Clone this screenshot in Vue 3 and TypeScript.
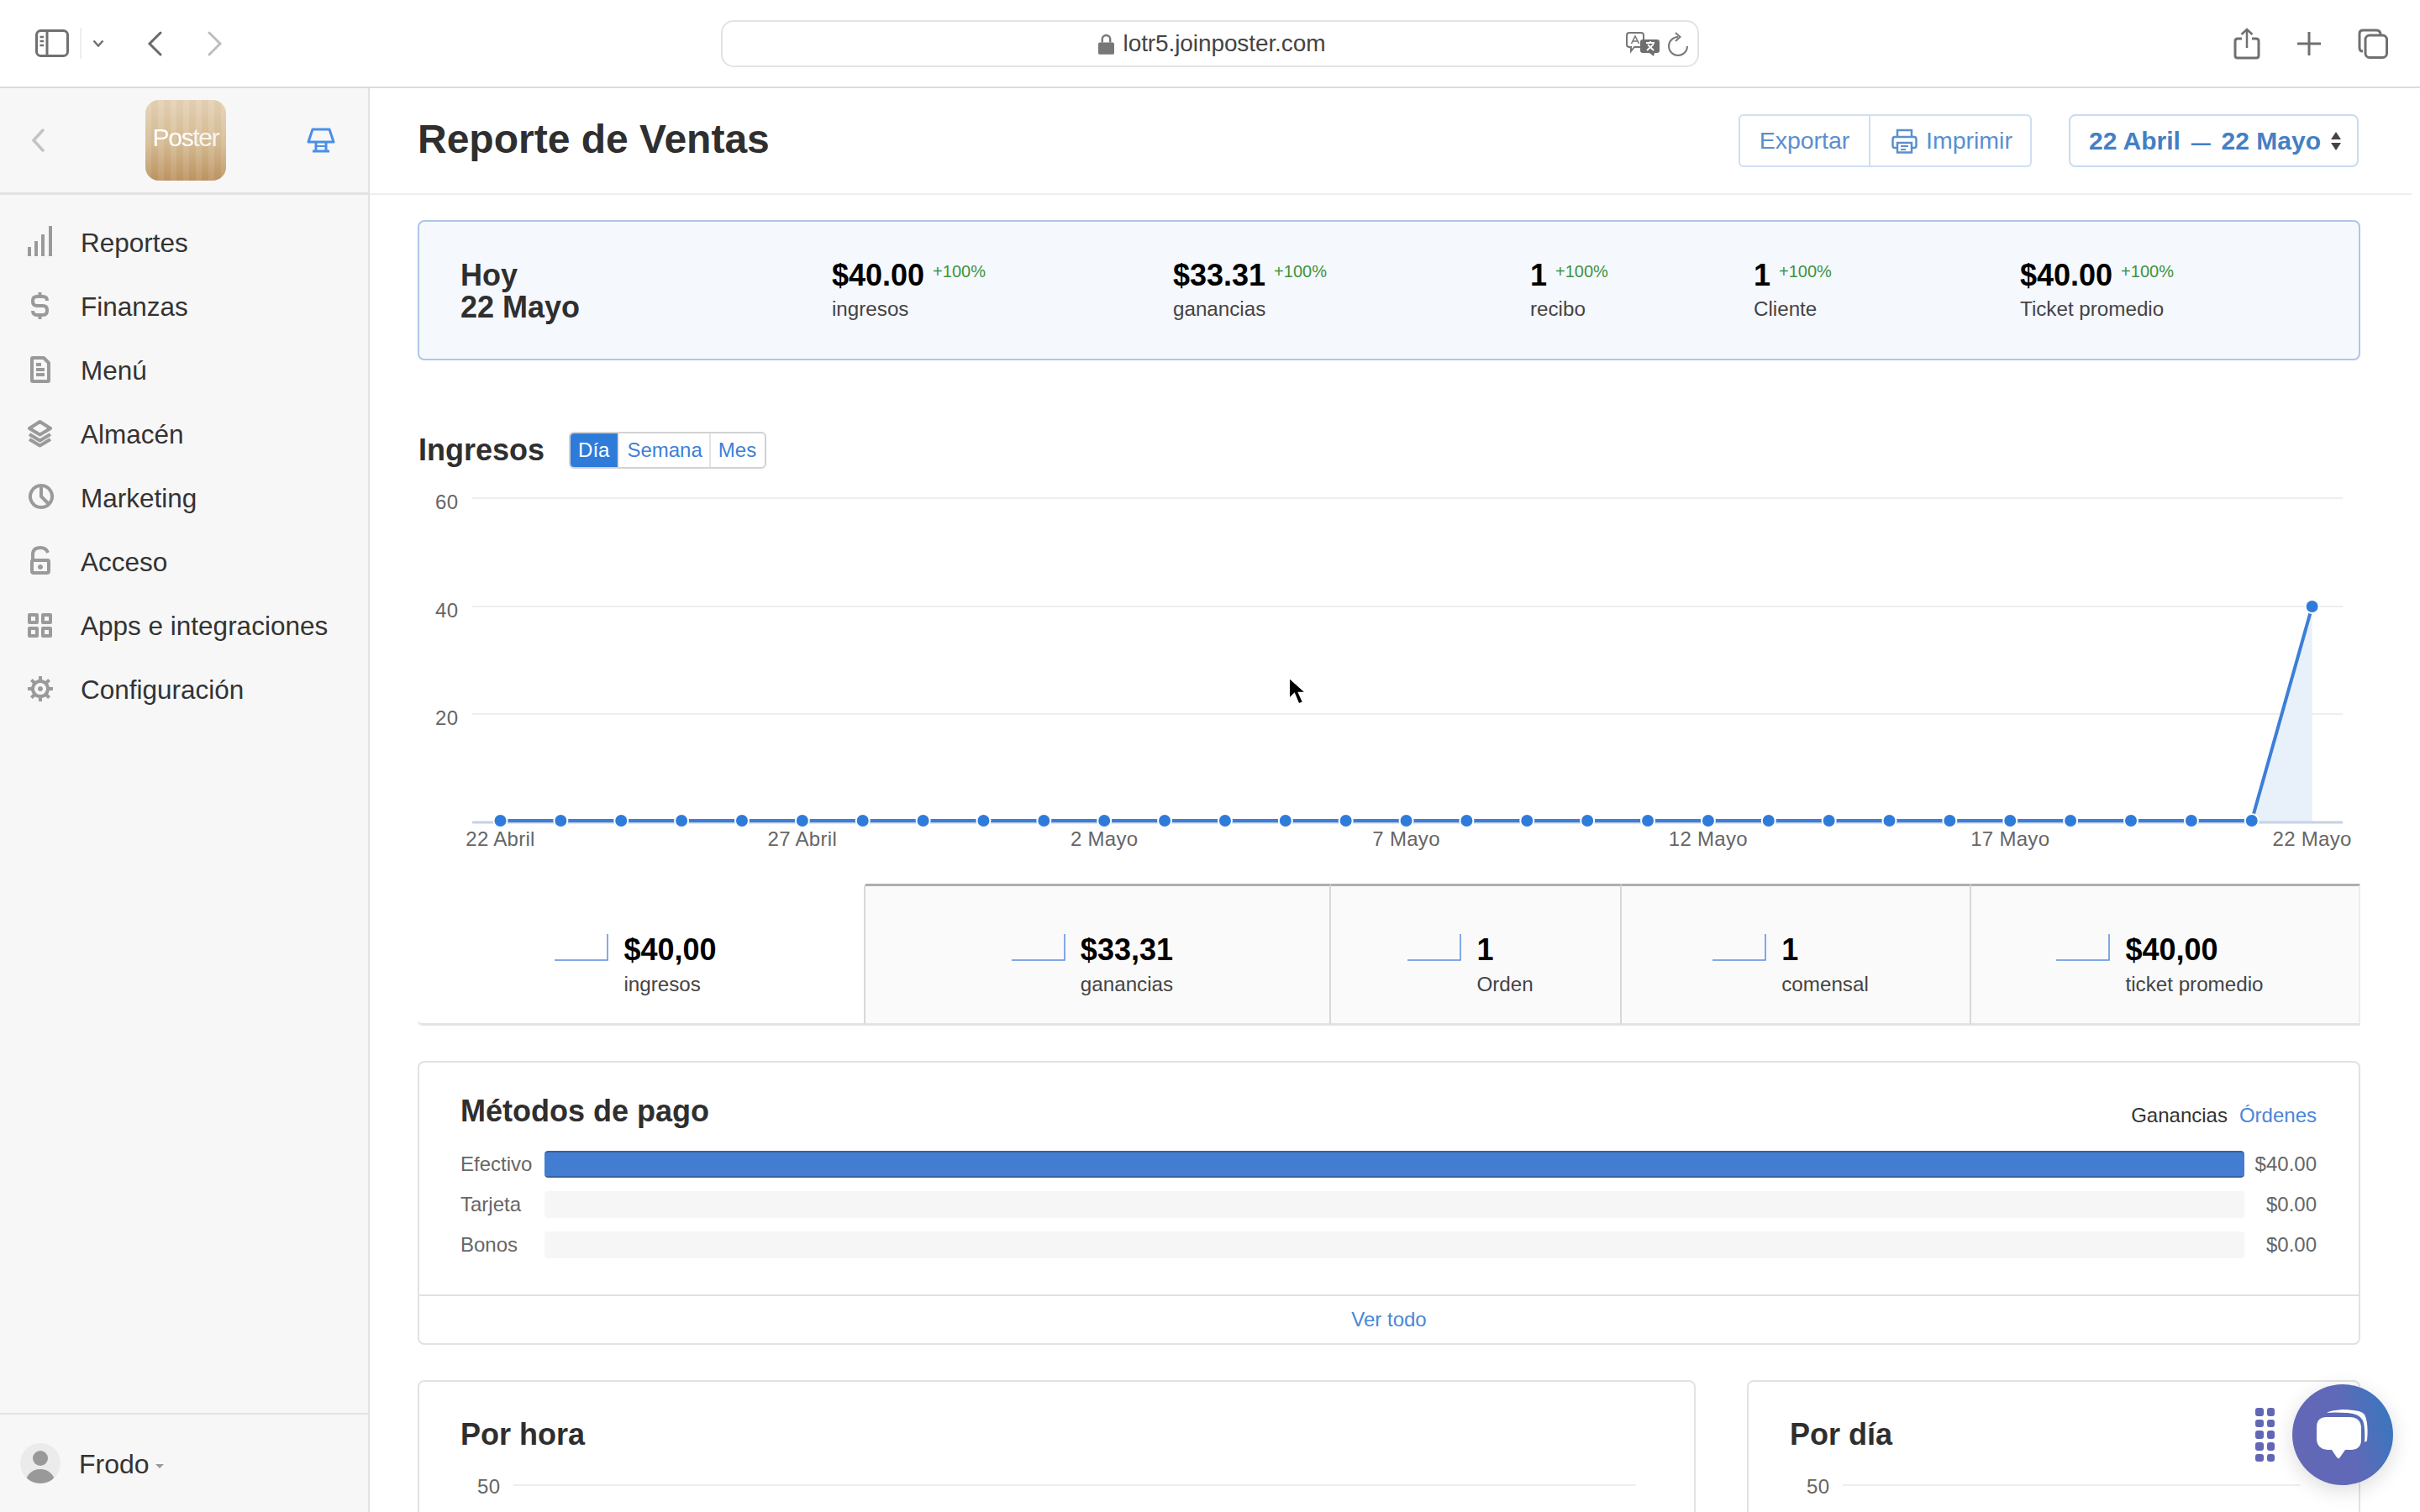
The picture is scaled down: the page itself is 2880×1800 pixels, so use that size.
<script setup lang="ts">
interface NavItem { label: string; stroke: string; fill: string }

const nav: NavItem[] = [
  { label: 'Reportes', stroke: '', fill: 'M5 25h4v11H5zM13 18h4v18h-4zM21 10h4v26h-4zM30 0h4v36h-4z' },
  { label: 'Finanzas', stroke: 'M28 13Q28 8 23 8H16Q11 8 11 13V14Q11 19 16 19H23Q28 19 28 24V25Q28 30 23 30H16Q11 30 11 25M19.5 3V8M19.5 30V35', fill: '' },
  { label: 'Menú', stroke: 'M10 6Q10 5 11 5H24L30 11V32Q30 33 29 33H11Q10 33 10 32ZM15 13H21M15 19H25M15 25H25', fill: '' },
  { label: 'Almacén', stroke: 'M19.5 5L32 13L19.5 20.500L7 13ZM7 20L19.5 27.500L32 20M7 26L19.500 33.500L32 26', fill: '' },
  { label: 'Marketing', stroke: 'M21 5a13 13 0 1 0 .01 0M21 5V18L30 27', fill: '' },
  { label: 'Acceso', stroke: 'M11 18V11Q11 3 20 3Q27 3 29 9M11 18H29Q30 18 30 20V31Q30 33 28 33H12Q10 33 10 31V20Q10 18 11 18Z', fill: 'M20 23a3 3 0 1 0 .01 0' },
  { label: 'Apps e integraciones', stroke: 'M7 7h9v9H7zM23 7h9v9h-9zM7 23h9v9H7zM23 23h9v9h-9z', fill: '' },
  { label: 'Configuración', stroke: 'M20 10a9 9 0 1 0 .01 0M20 4V9M20 29V34M5 19H10M30 19H35M9.400 8.400L13 12M27 26L30.600 29.600M30.600 8.400L27 12M13 26L9.400 29.600', fill: 'M20 16a3 3 0 1 0 .01 0' },
]

const stats = [
  { value: '$40.00', label: 'ingresos' },
  { value: '$33.31', label: 'ganancias' },
  { value: '1', label: 'recibo' },
  { value: '1', label: 'Cliente' },
  { value: '$40.00', label: 'Ticket promedio' },
]

const metrics = [
  { value: '$40,00', label: 'ingresos', active: true },
  { value: '$33,31', label: 'ganancias', active: false },
  { value: '1', label: 'Orden', active: false },
  { value: '1', label: 'comensal', active: false },
  { value: '$40,00', label: 'ticket promedio', active: false },
]

const payments = [
  { label: 'Efectivo', value: '$40.00', pct: 100 },
  { label: 'Tarjeta', value: '$0.00', pct: 0 },
  { label: 'Bonos', value: '$0.00', pct: 0 },
]

const gridLines = [
  { y: 23, label: '60' },
  { y: 152, label: '40' },
  { y: 280, label: '20' },
]

const step = 71.87
const x0 = 98.5
const baseY = 407
const points = Array.from({ length: 31 }, (_, i) => ({
  x: x0 + step * i,
  y: i === 30 ? 152 : baseY,
}))
const linePoints = points.map((p) => `${p.x},${p.y}`).join(' ')
const xLabels = ['22 Abril', '27 Abril', '2 Mayo', '7 Mayo', '12 Mayo', '17 Mayo', '22 Mayo'].map((text, i) => ({
  text,
  x: x0 + step * 5 * i,
}))
const dots = Array.from({ length: 10 }, (_, i) => i)
</script>

<template>
  <div class="app">
    <header class="toolbar">
      <div class="tb-left">
        <svg class="tb-sidebar" width="40" height="33" viewBox="0 0 40 33" fill="none" stroke="#707070" stroke-width="3">
          <rect x="1.500" y="1.500" width="37" height="30" rx="5" />
          <path d="M14 2V31" />
          <path d="M5.500 9H10M5.500 14H10M5.500 19H10" stroke-width="2.500" />
        </svg>
        <span class="tb-sep"></span>
        <svg class="tb-caret" width="14" height="9" viewBox="0 0 14 9" fill="none" stroke="#707070" stroke-width="2.500">
          <path d="M1.500 1.500L7 7.500L12.500 1.500" />
        </svg>
        <svg class="tb-back" width="18" height="30" viewBox="0 0 18 30" fill="none" stroke="#6a6a6a" stroke-width="3" stroke-linecap="round">
          <path d="M16 2L3 15L16 28" />
        </svg>
        <svg class="tb-fwd" width="18" height="30" viewBox="0 0 18 30" fill="none" stroke="#bdbdbd" stroke-width="3" stroke-linecap="round">
          <path d="M2 2L15 15L2 28" />
        </svg>
      </div>
      <div class="address">
        <span class="address-center">
          <svg width="19" height="25" viewBox="0 0 20 26" fill="#777">
            <path d="M2 11h16a2 2 0 0 1 2 2v11a2 2 0 0 1-2 2H2a2 2 0 0 1-2-2V13a2 2 0 0 1 2-2z" />
            <path d="M5 11V7a5 5 0 0 1 10 0v4" fill="none" stroke="#777" stroke-width="2.500" />
          </svg>
          <span class="address-text">lotr5.joinposter.com</span>
        </span>
        <span class="address-right">
          <svg width="41" height="29" viewBox="0 0 41 29" fill="none">
            <path d="M4 1H18Q21 1 21 4V15Q21 18 18 18H10L6 23V18H4Q1 18 1 15V4Q1 1 4 1Z" stroke="#777" stroke-width="2" fill="#fff" />
            <path d="M6.500 14L11 5L15.500 14M8 11H14" stroke="#777" stroke-width="1.600" />
            <path d="M20 9H37Q40 9 40 12V22Q40 25 37 25H34L33 29L28 25H20Q17 25 17 22V12Q17 9 20 9Z" fill="#6e6e6e" />
            <path d="M24 13H34M29 11V13M25 22L33 14.500M26 15L33 22" stroke="#fff" stroke-width="1.800" />
          </svg>
          <svg width="26" height="30" viewBox="0 0 26 30" fill="none" stroke="#777" stroke-width="2">
            <path d="M13 6A11 11 0 1 0 24 17" />
            <path d="M10 1L15.500 6L10 11" />
          </svg>
        </span>
      </div>
      <div class="tb-right">
        <svg width="32" height="38" viewBox="0 0 32 38" fill="none" stroke="#707070" stroke-width="3">
          <path d="M10 13H5Q2 13 2 16V33Q2 36 5 36H27Q30 36 30 33V16Q30 13 27 13H22" />
          <path d="M16 24V2M9.500 8L16 2L22.500 8" stroke-width="2.500" />
        </svg>
        <svg class="tb-plus" width="28" height="28" viewBox="0 0 28 28" fill="none" stroke="#707070" stroke-width="3">
          <path d="M14 0V28M0 14H28" />
        </svg>
        <svg class="tb-tabs" width="36" height="36" viewBox="0 0 36 36" fill="none" stroke="#707070" stroke-width="3">
          <path d="M6 27Q2 27 2 23V6Q2 2 6 2H22Q27 2 27 7" />
          <rect x="9" y="8" width="25.500" height="26.500" rx="5" />
        </svg>
      </div>
    </header>

    <div class="body">
      <aside class="sidebar">
        <div class="side-head">
          <svg class="side-back" width="16" height="28" viewBox="0 0 16 28" fill="none" stroke="#c3c3c3" stroke-width="3.500" stroke-linecap="round">
            <path d="M14 2L3 14L14 26" />
          </svg>
          <div class="logo"><span class="logo-strong">Pos</span><span class="logo-light">ter</span></div>
          <svg width="34" height="30" viewBox="0 0 34 30" fill="none" stroke="#4a8fe7" stroke-width="3" stroke-linejoin="round">
            <path d="M7 2H27L32 17H2Z" />
            <path d="M11 17V27M23 17V27M7 28H27" />
            <path d="M11 22H23" stroke-width="2" />
          </svg>
        </div>
        <nav class="nav">
          <a v-for="item in nav" :key="item.label" class="nav-row">
            <svg class="nav-icon" width="40" height="40" viewBox="0 0 40 40">
              <path v-if="item.stroke" :d="item.stroke" fill="none" stroke="#9a9a9a" stroke-width="4" stroke-linejoin="round" />
              <path v-if="item.fill" :d="item.fill" fill="#9a9a9a" />
            </svg>
            <span>{{ item.label }}</span>
          </a>
        </nav>
        <div class="user">
          <svg width="48" height="48" viewBox="0 0 48 48">
            <clipPath id="avatarClip"><circle cx="24" cy="24" r="24" /></clipPath>
            <circle cx="24" cy="24" r="24" fill="#ebebeb" />
            <g clip-path="url(#avatarClip)" fill="#999">
              <circle cx="24" cy="18" r="9" />
              <ellipse cx="24" cy="46" rx="17" ry="15" />
            </g>
          </svg>
          <span class="user-name">Frodo</span>
          <span class="user-caret"></span>
        </div>
      </aside>

      <main class="main">
        <div class="page-head">
          <h1>Reporte de Ventas</h1>
          <div class="head-actions">
            <div class="btn-group">
              <button class="btn btn-export">Exportar</button>
              <button class="btn btn-print">
                <svg width="31" height="30" viewBox="0 0 31 30" fill="none" stroke="#5a8fd0" stroke-width="2.500">
                  <path d="M7 10V2H24V10" />
                  <path d="M7 23H4Q1.500 23 1.500 20.500V13Q1.500 10 4 10H27Q29.500 10 29.500 13V20.500Q29.500 23 27 23H24" />
                  <path d="M7 17H24V28.500H7Z" />
                  <path d="M11 21H20M11 25H17" stroke-width="2" />
                </svg>
                <span>Imprimir</span>
              </button>
            </div>
            <button class="date-btn">
              <span>22 Abril <span class="dash">—</span> 22 Mayo</span>
              <svg width="12" height="22" viewBox="0 0 12 22" fill="#444">
                <path d="M6 0L12 9H0ZM0 13H12L6 22Z" />
              </svg>
            </button>
          </div>
        </div>

        <div class="content">
          <section class="today">
            <div class="today-title">Hoy<br />22 Mayo</div>
            <div v-for="s in stats" :key="s.label" class="today-stat">
              <div class="stat-top">
                <span class="big">{{ s.value }}</span>
                <span class="pct">+100%</span>
              </div>
              <div class="small">{{ s.label }}</div>
            </div>
          </section>

          <div class="chart-head">
            <h2>Ingresos</h2>
            <div class="seg">
              <span class="seg-item seg-on">Día</span>
              <span class="seg-item seg-mid">Semana</span>
              <span class="seg-item seg-end">Mes</span>
            </div>
          </div>

          <svg class="chart" width="2312" height="483" viewBox="0 0 2312 483">
            <g v-for="g in gridLines" :key="g.label">
              <rect x="65" :y="g.y - 1" width="2226" height="2" fill="#eeeeee" />
              <text x="21" :y="g.y + 13" class="axis">{{ g.label }}</text>
            </g>
            <polygon :points="`2183,408 2254.600,152 2254.600,408`" fill="#e8f0fa" />
            <rect x="65" y="407.500" width="2226" height="3" fill="#c6d2e2" />
            <polyline :points="linePoints" fill="none" stroke="#3c7ed8" stroke-width="4" />
            <circle v-for="(p, i) in points" :key="i" :cx="p.x" :cy="p.y" r="8" fill="#2f7bd9" stroke="#fff" stroke-width="2" />
            <text v-for="l in xLabels" :key="l.text" :x="l.x" y="436.500" text-anchor="middle" class="axis">{{ l.text }}</text>
          </svg>

          <section class="metrics">
            <div v-for="m in metrics" :key="m.label" class="metric" :class="{ 'metric-on': m.active }">
              <svg class="spark" width="64" height="32" viewBox="0 0 64 32" fill="none">
                <path d="M0 31H63V0" stroke="#5b8fe0" stroke-width="1.500" />
              </svg>
              <div>
                <div class="big">{{ m.value }}</div>
                <div class="small metric-label">{{ m.label }}</div>
              </div>
            </div>
          </section>

          <section class="card payments">
            <div class="pay-body">
              <div class="pay-head">
                <h2>Métodos de pago</h2>
                <div class="pay-toggle">
                  <span class="toggle-on">Ganancias</span>
                  <span class="link">Órdenes</span>
                </div>
              </div>
              <div class="pay-rows">
                <div v-for="p in payments" :key="p.label" class="pay-row">
                  <span class="pay-label">{{ p.label }}</span>
                  <div class="track">
                    <div class="fill" :class="{ 'fill-full': p.pct > 0 }" :style="{ width: p.pct + '%' }"></div>
                  </div>
                  <span class="pay-value">{{ p.value }}</span>
                </div>
              </div>
            </div>
            <div class="pay-foot"><span class="link">Ver todo</span></div>
          </section>

          <div class="bottom">
            <section class="card mini">
              <h2>Por hora</h2>
              <div class="mini-axis"><span class="mini-label">50</span><span class="mini-line"></span></div>
            </section>
            <section class="card mini">
              <h2>Por día</h2>
              <div class="mini-axis"><span class="mini-label">50</span><span class="mini-line"></span></div>
            </section>
          </div>
        </div>
      </main>
    </div>

    <div class="grip"><span v-for="d in dots" :key="d" class="grip-dot"></span></div>
    <div class="chat">
      <svg width="120" height="120" viewBox="0 0 120 120" fill="#fff">
        <path d="M41 34Q44 31 60 30Q82 30 86 36Q91 46 89 67Q88 68 86 69Q87 52 84 43Q80 35 66 34Q50 33 41 34Z" />
        <path d="M29 51Q29 39 41 39H68Q81 39 82 51V66Q82 77 71 78H63L56 88Q55 89 53 87L47 78H42Q30 77 29 66Z" />
      </svg>
    </div>
    <svg class="cursor" width="23" height="35" viewBox="0 0 22 34">
      <path d="M1 1V25L7 19L12 31L17 29L12 18H20Z" fill="#000" stroke="#fff" stroke-width="1.500" />
    </svg>
  </div>
</template>

<style>
html, body { margin: 0; background: #fff; }
</style>

<style scoped>
* { box-sizing: border-box; }
h1, h2 { margin: 0; font-weight: 700; color: #2f2f2f; }
.app {
  position: relative;
  width: 2880px;
  height: 1800px;
  overflow: hidden;
  display: flex;
  flex-direction: column;
  font-family: "Liberation Sans", Arial, sans-serif;
  background: #fff;
  color: #333;
}
.toolbar {
  height: 105px;
  flex: none;
  display: grid;
  grid-template-columns: 858px 1164px 1fr;
  align-items: center;
  border-bottom: 2px solid #dcdcdc;
}
.tb-left { display: flex; align-items: center; padding-left: 42px; }
.tb-sidebar { margin-right: 13px; }
.tb-sep { width: 2px; height: 37px; background: #eeeeee; margin-right: 13px; }
.tb-caret { margin-right: 51px; }
.tb-back { margin-right: 54px; }
.address {
  height: 56px;
  border: 2px solid #e3e3e3;
  border-radius: 15px;
  position: relative;
  display: flex;
  align-items: center;
  justify-content: center;
}
.address-center { display: flex; align-items: center; gap: 11px; margin-left: 4px; padding-top: 1px; }
.address-text { font-size: 28px; color: #444; letter-spacing: -0.100px; }
.address-right {
  position: absolute;
  right: 10px;
  top: 12px;
  display: flex;
  align-items: flex-start;
  gap: 8px;
}
.tb-right { display: flex; align-items: center; padding-left: 636px; }
.tb-plus { margin-left: 44px; margin-right: 44px; }
.body { flex: 1; display: flex; min-height: 0; }
.sidebar {
  width: 440px;
  flex: none;
  background: #f7f7f7;
  border-right: 2px solid #e2e2e2;
  display: flex;
  flex-direction: column;
}
.side-head {
  height: 127px;
  flex: none;
  display: flex;
  align-items: center;
  padding-left: 37px;
  border-bottom: 3px solid #e2e2e2;
}
.side-back { margin-right: 120px; }
.logo {
  width: 96px;
  height: 96px;
  margin-right: 96px;
  border-radius: 16px;
  display: flex;
  align-items: center;
  justify-content: center;
  padding-bottom: 6px;
  color: #fff;
  font-size: 30px;
  letter-spacing: -1.300px;
  background:
    repeating-linear-gradient(90deg, rgba(255, 255, 255, 0.07) 0 7px, rgba(120, 80, 30, 0.03) 7px 15px),
    linear-gradient(180deg, #e5d3b7 0%, #d6bb93 55%, #bd9563 100%);
}
.logo-light { font-weight: 400; opacity: 0.85; }
.nav { padding-top: 19px; display: flex; flex-direction: column; }
.nav-row {
  height: 76px;
  display: flex;
  align-items: center;
  padding-left: 28px;
  gap: 28px;
  font-size: 31.500px;
  color: #333;
}
.user {
  margin-top: auto;
  height: 118px;
  border-top: 2px solid #e2e2e2;
  display: flex;
  align-items: center;
  padding: 0 0 0 24px;
}
.user-name { margin-left: 22px; margin-top: 2px; font-size: 32px; color: #333; }
.user-caret {
  margin-left: 7px;
  margin-top: 6px;
  width: 0;
  height: 0;
  border-left: 5px solid transparent;
  border-right: 5px solid transparent;
  border-top: 5px solid #999;
}
.main { flex: 1; min-width: 0; }
.page-head {
  height: 127px;
  margin-right: 10px;
  padding: 0 63px 0 57px;
  border-bottom: 2px solid #eeeeee;
  display: flex;
  align-items: center;
  justify-content: space-between;
}
.page-head h1 { font-size: 48px; line-height: 48px; margin-top: -4px; }
.head-actions { display: flex; gap: 44px; }
.btn-group {
  height: 63px;
  width: 349px;
  display: flex;
  border: 2px solid #cfdff2;
  border-radius: 6px;
}
.btn {
  border: 0;
  background: #fff;
  font: inherit;
  font-size: 28.500px;
  color: #5a8fd0;
  padding: 0;
  display: flex;
  align-items: center;
  border-radius: 6px;
}
.btn-export { width: 155px; justify-content: center; border-right: 2px solid #cfdff2; border-radius: 6px 0 0 6px; }
.btn-print { flex: 1; padding-left: 25px; gap: 10px; }
.date-btn {
  width: 345px;
  height: 63px;
  border: 2px solid #c9dbf0;
  border-radius: 8px;
  background: #fff;
  font: inherit;
  font-size: 30px;
  font-weight: 700;
  color: #4380c4;
  display: flex;
  align-items: center;
  padding: 0 0 0 22px;
  gap: 12px;
}
.dash { font-size: 23px; margin: 0 4.500px; }
.content { padding: 30px 71px 0 57px; }
.today {
  height: 167px;
  display: grid;
  grid-template-columns: 442px 406px 425px 266px 317px 1fr;
  padding: 45px 0 0 49px;
  background: #f5f8fd;
  border: 2px solid #aec6e8;
  border-radius: 8px;
}
.today-title { font-size: 36px; line-height: 38px; font-weight: 700; color: #2f2f2f; }
.stat-top { display: flex; align-items: flex-start; }
.big { font-size: 36px; line-height: 38px; font-weight: 700; color: #000; }
.pct { font-size: 20px; line-height: 20px; margin: 4px 0 0 10px; color: #3f933f; }
.small { font-size: 24.200px; line-height: 30px; margin-top: 6px; color: #444; }
.chart-head { margin-top: 85px; margin-left: 1px; display: flex; align-items: flex-start; gap: 29px; }
.chart-head h2 { font-size: 36px; line-height: 38px; margin-top: 3px; }
.seg {
  height: 44px;
  display: flex;
  border: 2px solid #d2d2d2;
  border-radius: 6px;
  overflow: hidden;
}
.seg-item {
  display: flex;
  align-items: center;
  padding: 0 10px;
  font-size: 24px;
  color: #3f7fd6;
  border-left: 2px solid #e4e4e4;
}
.seg-item:first-child { border-left: 0; }
.seg-on { background: #2f7bd9; color: #fff; padding: 0 10px 0 11px; margin: -2px 0 -2px -2px; }
.seg-mid { padding: 0 8px 0 9px; }
.seg-end { padding: 0 10px 0 9px; }
.chart { display: block; margin-top: 12px; }
.axis { font-size: 24px; fill: #666; letter-spacing: 0.300px; font-family: "Liberation Sans", Arial, sans-serif; }
.metrics {
  height: 169px;
  margin-top: -1px;
  display: grid;
  grid-template-columns: 533px 554px 346px 416px 1fr;
}
.metric {
  display: flex;
  justify-content: center;
  padding: 57px 12px 0 0;
  background: #fafafa;
  border-top: 3px solid #aeaeae;
  border-right: 2px solid #d8d8d8;
  border-bottom: 3px solid #e3e3e3;
}
.metric:last-child { border-right-color: #ececec; }
.metric-on { background: #fff; border-top-color: transparent; border-bottom-left-radius: 6px; }
.metric-label { margin-top: 7px; }
.spark { margin: 0 18px 0 0; flex: none; }
.card { border: 2px solid #e2e2e2; border-radius: 8px; background: #fff; }
.payments { height: 338px; margin-top: 42px; display: flex; flex-direction: column; }
.pay-body { flex: 1; padding: 39px 50px 0 49px; }
.pay-head { display: flex; justify-content: space-between; align-items: flex-start; height: 39px; }
.pay-head h2 { font-size: 36px; line-height: 38px; }
.pay-toggle { display: flex; gap: 14px; font-size: 24px; line-height: 30px; margin-top: 9px; }
.toggle-on { color: #333; }
.link { color: #4a86d8; }
.pay-rows { margin-top: 27px; display: flex; flex-direction: column; gap: 16px; }
.pay-row { display: grid; grid-template-columns: 100px 1fr 86px; align-items: center; height: 32px; font-size: 24px; color: #666; }
.pay-value { text-align: right; }
.track { height: 32px; background: #f6f6f6; border-radius: 4px; overflow: hidden; }
.fill { height: 100%; }
.fill-full { background: #427dd1; border-top: 2px solid #36619f; border-bottom: 2px solid #36619f; border-radius: 4px; }
.pay-foot {
  height: 58px;
  flex: none;
  border-top: 2px solid #e2e2e2;
  display: flex;
  align-items: center;
  justify-content: center;
  font-size: 24px;
}
.bottom { margin-top: 42px; display: grid; grid-template-columns: 1521px 730px; gap: 61px; }
.mini { height: 300px; padding: 44px 50px 0 49px; }
.mini h2 { font-size: 36px; line-height: 38px; }
.mini-axis { margin: 28px 19px 0 20px; display: flex; align-items: flex-start; gap: 16px; }
.mini-label { font-size: 24px; line-height: 30px; color: #666; letter-spacing: 0.300px; }
.mini-line { flex: 1; height: 2px; margin-top: 12px; background: #eeeeee; }
.grip {
  position: absolute;
  left: 2684px;
  top: 1676px;
  display: grid;
  grid-template-columns: 9.500px 9.500px;
  grid-auto-rows: 9.500px;
  column-gap: 4.300px;
  row-gap: 4.200px;
}
.grip-dot { background: #6266b6; border-radius: 3px; }
.chat {
  position: absolute;
  left: 2728px;
  top: 1648px;
  width: 120px;
  height: 120px;
  border-radius: 50%;
  background: linear-gradient(75deg, #6467b6 0%, #5f69b7 55%, #3279c0 100%);
  box-shadow: 0 6px 24px rgba(0, 0, 0, 0.14);
}
.chat svg { display: block; }
.cursor { position: absolute; left: 1533px; top: 806px; }
</style>
